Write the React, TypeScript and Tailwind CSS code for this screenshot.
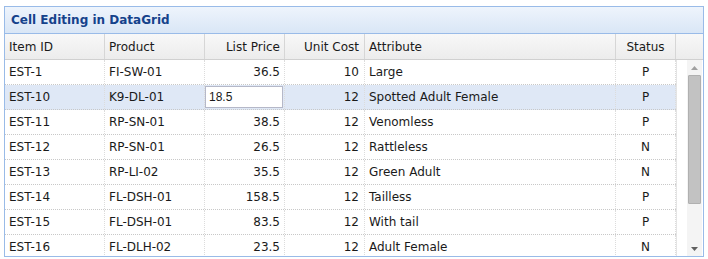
import { memo } from 'react'

interface Item {
  id: string
  product: string
  listPrice: string
  unitCost: string
  attr: string
  status: string
}

const items: Item[] = [
  { id: 'EST-1', product: 'FI-SW-01', listPrice: '36.5', unitCost: '10', attr: 'Large', status: 'P' },
  { id: 'EST-10', product: 'K9-DL-01', listPrice: '18.5', unitCost: '12', attr: 'Spotted Adult Female', status: 'P' },
  { id: 'EST-11', product: 'RP-SN-01', listPrice: '38.5', unitCost: '12', attr: 'Venomless', status: 'P' },
  { id: 'EST-12', product: 'RP-SN-01', listPrice: '26.5', unitCost: '12', attr: 'Rattleless', status: 'N' },
  { id: 'EST-13', product: 'RP-LI-02', listPrice: '35.5', unitCost: '12', attr: 'Green Adult', status: 'N' },
  { id: 'EST-14', product: 'FL-DSH-01', listPrice: '158.5', unitCost: '12', attr: 'Tailless', status: 'P' },
  { id: 'EST-15', product: 'FL-DSH-01', listPrice: '83.5', unitCost: '12', attr: 'With tail', status: 'P' },
  { id: 'EST-16', product: 'FL-DLH-02', listPrice: '23.5', unitCost: '12', attr: 'Adult Female', status: 'N' },
]

// 编辑中的行
const EDIT_ROW = 1

const Row = memo(({ item, editing }: { item: Item; editing: boolean }) => {
  const cell = 'h-full flex items-center border-r border-dotted border-[#dcdcdc] shrink-0'
  return (
    <div className={`flex h-[25px] w-[671px] shrink-0 border-b border-dotted border-[#c8c8c8] ${editing ? 'bg-[#dfe8f6]' : 'bg-white'}`}>
      <div className={`${cell} w-[100px] pl-[4px]`}>{item.id}</div>
      <div className={`${cell} w-[100px] pl-[4px]`}>{item.product}</div>
      {editing ? (
        <div className={`${cell} w-[80px] py-px pr-px`}>
          <div className="flex h-full w-full items-center border border-[#b5b8c8] bg-white pl-[3px] text-[12px] font-['Liberation_Sans',Arial,sans-serif]">
            {item.listPrice}
          </div>
        </div>
      ) : (
        <div className={`${cell} w-[80px] justify-end pr-[4px]`}>{item.listPrice}</div>
      )}
      <div className={`${cell} w-[80px] justify-end pr-[5px]`}>{item.unitCost}</div>
      <div className={`${cell} w-[251px] pl-[4px]`}>{item.attr}</div>
      <div className={`${cell} w-[60px] justify-center`}>{item.status}</div>
    </div>
  )
})

Row.displayName = 'Row'

export default function App() {
  const head = 'h-full flex items-center border-r border-[#d6d6d6] shrink-0'
  return (
    <div className="h-[259px] w-[708px] overflow-hidden bg-white pl-[4px] pt-[6px] font-['DejaVu_Sans',Verdana,sans-serif] text-[12px] text-[#1a1a1a]">
      <div className="flex h-[251px] w-[700px] flex-col overflow-hidden border border-[#99bbe8]">
        {/* 标题栏 */}
        <div className="flex h-[27px] shrink-0 items-center border-b border-[#99bbe8] bg-linear-to-b from-[#eef4fc] to-[#d9e6f6] pl-[6px] font-bold text-[#15428b]">
          Cell Editing in DataGrid
        </div>

        {/* 表头 */}
        <div className="flex h-[26px] shrink-0 border-b border-[#d0d0d0] bg-linear-to-b from-[#f8f8f8] to-[#ececec]">
          <div className={`${head} w-[100px] pl-[4px]`}>Item ID</div>
          <div className={`${head} w-[100px] pl-[4px]`}>Product</div>
          <div className={`${head} w-[80px] justify-end pr-[4px]`}>List Price</div>
          <div className={`${head} w-[80px] justify-end pr-[5px]`}>Unit Cost</div>
          <div className={`${head} w-[251px] pl-[4px]`}>Attribute</div>
          <div className={`${head} w-[60px] justify-center`}>Status</div>
          <div className="flex-1" />
        </div>

        {/* 数据区 */}
        <div className="flex min-h-0 flex-1">
          <div className="flex flex-col overflow-hidden">
            {items.map((item, index) => (
              <Row key={item.id} item={item} editing={index === EDIT_ROW} />
            ))}
          </div>
          <div className="flex-1 border-l border-[#e4e4e4] bg-white" />
          <div className="mr-px flex w-[15px] shrink-0 flex-col bg-[#f4f4f4]">
            <div className="flex h-[15px] items-center justify-center">
              <svg width="7" height="4" viewBox="0 0 7 4">
                <path d="M0 4 L3.5 0 L7 4 Z" fill="#a0a0a0" />
              </svg>
            </div>
            <div className="mx-px h-[129px] rounded-[1px] border border-[#b0b0b0] bg-[#c2c2c2]" />
            <div className="flex-1" />
            <div className="flex h-[15px] items-center justify-center">
              <svg width="7" height="4" viewBox="0 0 7 4">
                <path d="M0 0 L3.5 4 L7 0 Z" fill="#606060" />
              </svg>
            </div>
          </div>
        </div>
      </div>
    </div>
  )
}
